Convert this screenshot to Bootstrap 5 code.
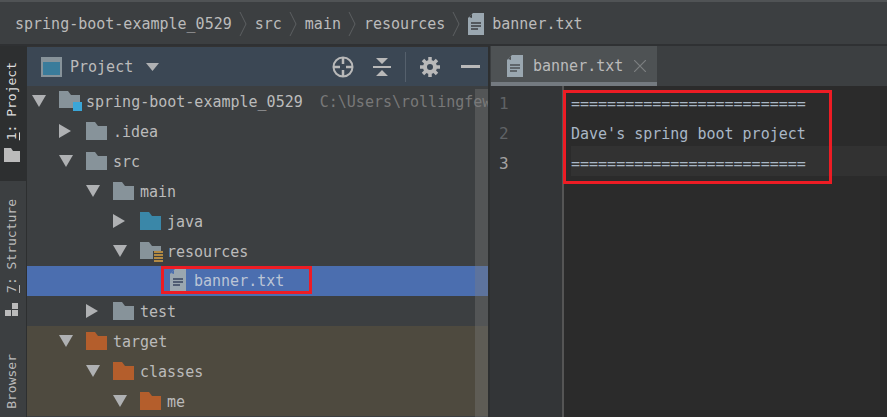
<!DOCTYPE html>
<html lang="en"><head><meta charset="utf-8"><title>banner.txt</title>
<link href="https://cdn.jsdelivr.net/npm/bootstrap@5.3.0/dist/css/bootstrap.min.css" rel="stylesheet">
<style>
html,body{height:417px;overflow:hidden}
body{background:#3c3f41;color:#bbb;font:15px/20px "DejaVu Sans Mono",monospace}
.mono-txt{font-family:"DejaVu Sans Mono",monospace;font-size:15px}
.mono-txt span{white-space:pre}
.crumbs{height:46px;padding:1px 0 0 15px;border-top:2px solid #505355;border-bottom:2px solid #2f3133;background:#3c3f41;color:#bbb}
.crumb-sep{margin:0 7px;flex:none}
.stripe{width:27px;flex:none;background:#3c3f41;border-right:1px solid #2d2f30;height:371px}
.stripe-active{height:135px;background:#2d2f30;padding:16px 3px 0 0;gap:8px}
.vert{writing-mode:vertical-rl;transform:rotate(180deg);font-size:13px;line-height:14px;color:#bbb;white-space:nowrap}
.stripe-active .vert{color:#ddd}
.stripe-mid{padding:18px 3px 0 0;gap:10px}
.stripe-low{padding:37px 3px 0 0}
.main-area{height:371px}
.tool{width:463px;flex:none;background:#3c3f41;border-right:2px solid #2d2f30;overflow:hidden}
.tool-head{height:40px;background:#3b4754;border-top:1px solid #333;padding-left:14px;color:#bbb;flex:none}
.tool-sep{width:1px;height:30px;background:#55606c;margin:0 14px}
.ic-caret{margin-left:13px}
.ic-collapse{margin-left:19px}
.ic-minus{width:19px;height:3px;background:#b9b9b9;margin:0 8px 0 21px;display:block}
.tree-wrap{position:relative;flex:1;overflow:hidden}
.t-row{height:30px;display:flex;align-items:center;white-space:nowrap}
.t-row>span,.red-box>span{padding-top:2px}
.l0{padding-left:5px}.l1{padding-left:32px}.l2{padding-left:59px}.l3{padding-left:86px}.l4{padding-left:134px}
.t-sel{background:#4b6eaf;align-items:flex-start}
.t-sel span{color:#bbc5d6}
.t-tgt{background:#4e4a3f}
.tw{width:27px;flex:none;display:inline-flex}
.fo{margin-right:5px;flex:none}
.fo-res{margin-right:3px}
.fo-root{margin-right:4px}
.hint{color:#787878;margin-left:17px}
.red-box{border:3px solid #ed1c24;padding:0 25px 0 6px;height:28px;display:flex;align-items:center;gap:8px}
.tree-bar{position:absolute;right:0;top:3px;bottom:0;width:13px;background:rgba(125,125,125,.36)}
.editor{flex:1;background:#2b2b2b;min-width:0}
.tabs{height:40px;background:#3c3f41;flex:none;padding-left:1px}
.tab-on{height:40px;padding:3px 11px 0 16px;background:#4e5254;border-bottom:4px solid #747a80;gap:10px;color:#bbb}
.tab-x{margin-left:1px}
.gutter{width:74px;flex:none;background:#333537;border-right:2px solid #555;color:#606366}
.gl{height:30px;line-height:36px;padding-left:9px;font-size:16px}
.gl.cur{color:#a4a3a3}
.code-area{flex:1;position:relative;min-width:0}
.cl{height:30px;padding-top:3px;line-height:31px;margin-left:7px;color:#a9b7c6}
.cl.cur{background:#323232}
.red-rect{position:absolute;left:-1px;top:4px;width:269px;height:94px;border:3px solid #ed1c24}
</style></head><body>
<div class="crumbs d-flex align-items-center mono-txt">
<span>spring-boot-example_0529</span><svg class="crumb-sep" width="9" height="26" viewBox="0 0 9 26"><path d="M1 1l6 12-6 12" fill="none" stroke="#5c5f61"/></svg>
<span>src</span><svg class="crumb-sep" width="9" height="26" viewBox="0 0 9 26"><path d="M1 1l6 12-6 12" fill="none" stroke="#5c5f61"/></svg>
<span>main</span><svg class="crumb-sep" width="9" height="26" viewBox="0 0 9 26"><path d="M1 1l6 12-6 12" fill="none" stroke="#5c5f61"/></svg>
<span>resources</span><svg class="crumb-sep" width="9" height="26" viewBox="0 0 9 26"><path d="M1 1l6 12-6 12" fill="none" stroke="#5c5f61"/></svg>
<svg width="16" height="22" viewBox="0 0 16 22" class="me-2"><path d="M5 0h11v22H0V5z" fill="#9aa7b0"/><path d="M4 5V1L1 4z" fill="#3c3f41"/><path d="M3 10h10M3 13h10M3 16h7" stroke="#3c3f41" stroke-width="1.400"/></svg>
<span>banner.txt</span>
</div>
<div class="d-flex main-area">
 <div class="stripe d-flex flex-column align-items-center">
  <div class="stripe-active w-100 d-flex flex-column align-items-center"><span class="vert"><u>1</u>: Project</span><svg width="16" height="14" viewBox="0 0 16 14"><path d="M0 0h7l2 3h7v11H0z" fill="#bbb"/></svg></div>
  <div class="stripe-mid d-flex flex-column align-items-center"><span class="vert"><u>7</u>: Structure</span><svg width="14" height="14" viewBox="0 0 14 14"><path d="M7 0h6v6H7zM0 7h6v6H0zM7 7h6v6H7z" fill="#bbb"/></svg></div>
  <div class="stripe-low"><span class="vert">Browser</span></div>
 </div>
 <div class="tool d-flex flex-column">
  <div class="tool-head d-flex align-items-center mono-txt">
   <svg width="21" height="20" viewBox="0 0 21 20"><path d="M0 0h21v20H0z" fill="#87939a"/><path d="M2 5h17v13H2z" fill="#3a7c9b"/></svg>
   <span class="ms-2">Project</span>
   <svg class="ic-caret" width="13" height="8" viewBox="0 0 13 8"><path d="M0 0h13L6.500 8z" fill="#afb1b3"/></svg>
   <span class="flex-grow-1"></span>
   <svg width="22" height="22" viewBox="0 0 22 22"><circle cx="11" cy="11" r="9.500" fill="none" stroke="#b9b9b9" stroke-width="2"/><path d="M11 1v7M11 14v7M1 11h7M14 11h7" stroke="#b9b9b9" stroke-width="2.500"/></svg>
   <svg class="ic-collapse" width="18" height="20" viewBox="0 0 18 20"><path d="M0 9h18v2H0z" fill="#b9b9b9"/><path d="M3 1h12L9 7zM3 19h12l-6-6z" fill="#b9b9b9"/></svg>
   <span class="tool-sep"></span>
   <svg width="20" height="20" viewBox="0 0 20 20"><circle cx="10" cy="10" r="5" fill="none" stroke="#b9b9b9" stroke-width="4"/><path d="M10 0v4M10 16v4M0 10h4M16 10h4M3 3l3 3M14 14l3 3M17 3l-3 3M6 14l-3 3" stroke="#b9b9b9" stroke-width="3.500"/></svg>
   <span class="ic-minus"></span>
  </div>
  <div class="tree-wrap mono-txt">
   <div class="t-row l0"><svg class="tw" width="27" height="12" viewBox="0 0 27 12"><path d="M0 0h14L7 12z" fill="#afb1b3"/></svg><svg class="fo fo-root" width="23" height="22" viewBox="0 0 23 22"><path d="M0 1h9l3 4h9v13H0z" fill="#87939a"/><path d="M14 12h9v9h-9z" fill="#3aa6d8"/></svg><span>spring-boot-example_0529</span><span class="hint">C:\Users\rollingfew</span></div>
   <div class="t-row l1"><svg class="tw" width="27" height="14" viewBox="0 0 27 14"><path d="M0 0l12 7L0 14z" fill="#afb1b3"/></svg><svg class="fo" width="22" height="18" viewBox="0 0 22 18"><path d="M0 0h9l3 4h9v14H0z" fill="#87939a"/></svg><span>.idea</span></div>
   <div class="t-row l1"><svg class="tw" width="27" height="12" viewBox="0 0 27 12"><path d="M0 0h14L7 12z" fill="#afb1b3"/></svg><svg class="fo" width="22" height="18" viewBox="0 0 22 18"><path d="M0 0h9l3 4h9v14H0z" fill="#87939a"/></svg><span>src</span></div>
   <div class="t-row l2"><svg class="tw" width="27" height="12" viewBox="0 0 27 12"><path d="M0 0h14L7 12z" fill="#afb1b3"/></svg><svg class="fo" width="22" height="18" viewBox="0 0 22 18"><path d="M0 0h9l3 4h9v14H0z" fill="#87939a"/></svg><span>main</span></div>
   <div class="t-row l3"><svg class="tw" width="27" height="14" viewBox="0 0 27 14"><path d="M0 0l12 7L0 14z" fill="#afb1b3"/></svg><svg class="fo" width="22" height="18" viewBox="0 0 22 18"><path d="M0 0h9l3 4h9v14H0z" fill="#3a87a8"/></svg><span>java</span></div>
   <div class="t-row l3"><svg class="tw" width="27" height="12" viewBox="0 0 27 12"><path d="M0 0h14L7 12z" fill="#afb1b3"/></svg><svg class="fo fo-res" width="24" height="24" viewBox="0 0 24 24"><path d="M0 3h9l3 4h9v13H0z" fill="#87939a"/><path d="M13 12h11v12H13z" fill="#3c3f41"/><path d="M14 13h9M14 16h9M14 19h9M14 22h9" stroke="#d9a343" stroke-width="1.500"/></svg><span>resources</span></div>
   <div class="t-row t-sel l4"><div class="red-box"><svg width="16" height="22" viewBox="0 0 16 22"><path d="M5 0h11v22H0V5z" fill="#9aa7b0"/><path d="M4 5V1L1 4z" fill="#4b6eaf"/><path d="M3 10h10M3 13h10M3 16h7" stroke="#38455f" stroke-width="1.500"/></svg><span>banner.txt</span></div></div>
   <div class="t-row l2"><svg class="tw" width="27" height="14" viewBox="0 0 27 14"><path d="M0 0l12 7L0 14z" fill="#afb1b3"/></svg><svg class="fo" width="22" height="18" viewBox="0 0 22 18"><path d="M0 0h9l3 4h9v14H0z" fill="#87939a"/></svg><span>test</span></div>
   <div class="t-row t-tgt l1"><svg class="tw" width="27" height="12" viewBox="0 0 27 12"><path d="M0 0h14L7 12z" fill="#afb1b3"/></svg><svg class="fo" width="22" height="18" viewBox="0 0 22 18"><path d="M0 0h9l3 4h9v14H0z" fill="#b45e2c"/></svg><span>target</span></div>
   <div class="t-row t-tgt l2"><svg class="tw" width="27" height="12" viewBox="0 0 27 12"><path d="M0 0h14L7 12z" fill="#afb1b3"/></svg><svg class="fo" width="22" height="18" viewBox="0 0 22 18"><path d="M0 0h9l3 4h9v14H0z" fill="#b45e2c"/></svg><span>classes</span></div>
   <div class="t-row t-tgt l3"><svg class="tw" width="27" height="12" viewBox="0 0 27 12"><path d="M0 0h14L7 12z" fill="#afb1b3"/></svg><svg class="fo" width="22" height="18" viewBox="0 0 22 18"><path d="M0 0h9l3 4h9v14H0z" fill="#b45e2c"/></svg><span>me</span></div>
   <div class="tree-bar"></div>
  </div>
 </div>
 <div class="editor d-flex flex-column mono-txt">
  <div class="tabs d-flex">
   <div class="tab-on d-flex align-items-center"><svg width="16" height="22" viewBox="0 0 16 22"><path d="M5 0h11v22H0V5z" fill="#9aa7b0"/><path d="M4 5V1L1 4z" fill="#4e5254"/><path d="M3 10h10M3 13h10M3 16h7" stroke="#4e5254" stroke-width="1.400"/></svg><span>banner.txt</span><svg class="tab-x" width="12" height="12" viewBox="0 0 12 12"><path d="M0 0l12 12M12 0L0 12" stroke="#7c7f81" stroke-width="1.200"/></svg></div>
  </div>
  <div class="d-flex flex-grow-1">
   <div class="gutter"><div class="gl">1</div><div class="gl">2</div><div class="gl cur">3</div></div>
   <div class="code-area">
    <div class="cl"><span>==========================</span></div>
    <div class="cl"><span>Dave's spring boot project</span></div>
    <div class="cl cur"><span>==========================</span></div>
    <div class="red-rect"></div>
   </div>
  </div>
 </div>
</div>
</body></html>
